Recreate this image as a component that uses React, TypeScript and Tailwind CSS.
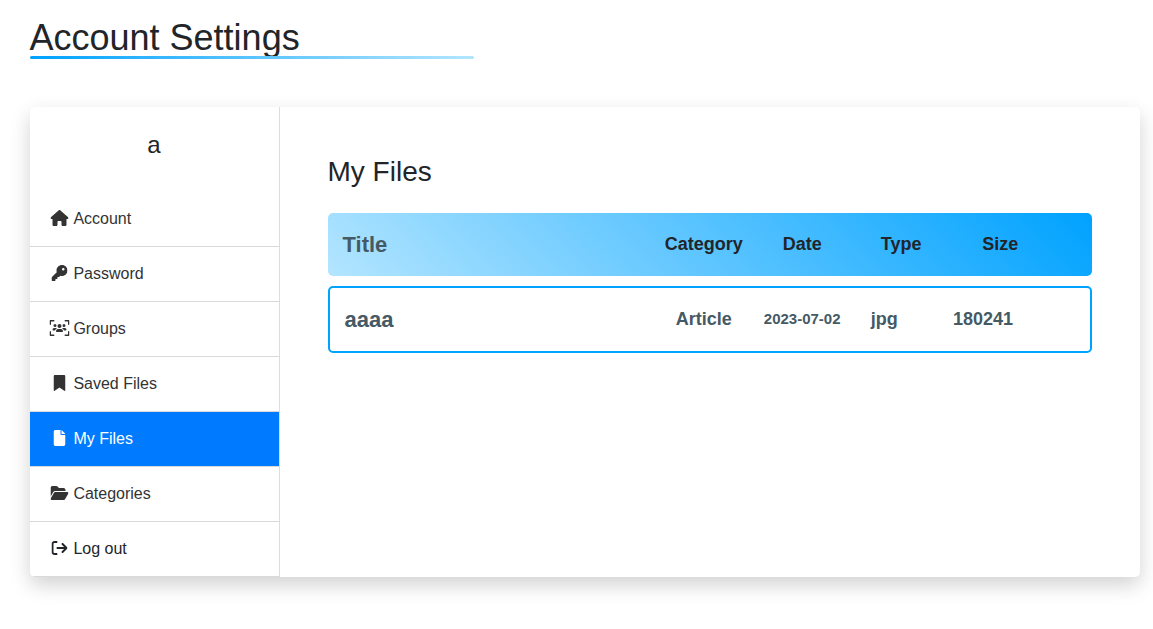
import type { IconType } from "react-icons";
import {
  FaArrowRightFromBracket,
  FaBookmark,
  FaFile,
  FaFolderOpen,
  FaHouse,
  FaKey,
  FaUsersViewfinder,
} from "react-icons/fa6";

type NavItem = { label: string; icon: IconType; size: string; tone: string };

const navItems: NavItem[] = [
  { label: "Account", icon: FaHouse, size: "w-[18px]", tone: "text-[#333]" },
  { label: "Password", icon: FaKey, size: "w-4", tone: "text-[#333]" },
  { label: "Groups", icon: FaUsersViewfinder, size: "w-5", tone: "text-[#333]" },
  { label: "Saved Files", icon: FaBookmark, size: "w-3", tone: "text-[#333]" },
  { label: "My Files", icon: FaFile, size: "w-3", tone: "bg-[#007bff] text-white" },
  { label: "Categories", icon: FaFolderOpen, size: "w-[18px]", tone: "text-[#333]" },
  { label: "Log out", icon: FaArrowRightFromBracket, size: "w-4", tone: "text-[#212529]" },
];

function Sidebar() {
  return (
    <aside className="w-[250px] shrink-0 border-r border-[#ddd]">
      <div className="h-[85px] pt-[23px] text-center text-[24px] leading-[29px]">a</div>
      <nav>
        {navItems.map(({ label, icon: Icon, size, tone }) => (
          <a
            key={label}
            className={`flex h-[55px] items-center gap-[4.4px] border-b border-[#d8d9da] pl-[19.5px] ${tone}`}
          >
            <span className="flex w-5 justify-center pb-[2px]">
              <Icon className={`h-4 shrink-0 translate-x-[0.5px] ${size}`} />
            </span>
            <span className="leading-6">{label}</span>
          </a>
        ))}
      </nav>
    </aside>
  );
}

function FileTable() {
  return (
    <div className="text-[18px] font-bold">
      <div className="flex h-[63px] items-center rounded-[5px] bg-[linear-gradient(45deg,#b3e5ff,#00a2ff)] pl-[15px]">
        <span className="w-[322.3px] text-[22px] text-[#455a64]">Title</span>
        <span className="w-[118px]">Category</span>
        <span className="w-[98px]">Date</span>
        <span className="w-[101.4px]">Type</span>
        <span>Size</span>
      </div>
      <div className="mt-[10px] flex h-[67px] items-center rounded-[5px] border-2 border-[#00a2ff] pl-[15px] text-[#455a64]">
        <span className="w-[331.3px] text-[22px]">aaaa</span>
        <span className="w-[88px]">Article</span>
        <span className="w-[107px] text-[15px]">2023-07-02</span>
        <span className="w-[82.2px]">jpg</span>
        <span>180241</span>
      </div>
    </div>
  );
}

export default function App() {
  return (
    <main className="h-[629px] overflow-hidden bg-white pl-[29.5px] font-['Liberation_Sans',Arial,sans-serif] text-base text-[#212529]">
      <header className="h-[107px] w-[1110px] pt-[16px]">
        <h1 className="h-[40px] text-[36px] leading-[43px]">Account Settings</h1>
        <div className="relative h-[3px] w-[444px] rounded-[2px] bg-[linear-gradient(90deg,#00a2ff,#b3e5ff)]" />
      </header>
      <section className="flex h-[470px] w-[1110px] overflow-hidden rounded-[5px] bg-white shadow-[0_8px_20px_rgba(0,0,0,0.18)]">
        <Sidebar />
        <div className="flex-1 px-12 pt-12">
          <h2 className="mb-[24px] text-[28px] leading-[34px]">My Files</h2>
          <FileTable />
        </div>
      </section>
    </main>
  );
}
